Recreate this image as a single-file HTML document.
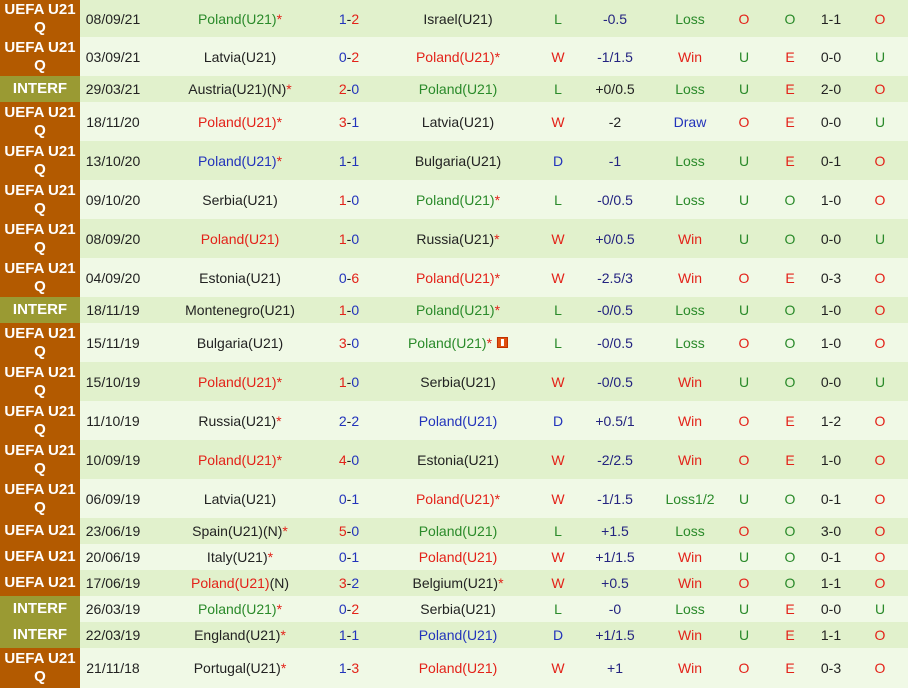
<!DOCTYPE html>
<html><head><meta charset="utf-8"><style>
body{margin:0;width:908px;height:688px;overflow:hidden;font-family:"Liberation Sans",Arial,sans-serif;font-size:14px;color:#222}
.r{position:relative;width:908px}
.d{background:#e1f1cc}.l{background:#f0f9e6}
.c{position:absolute;left:0;top:0;bottom:0;width:80px;color:#fff;font-weight:bold;font-size:15px;text-align:center;display:flex;align-items:center;justify-content:center;line-height:18px}
.u{background:#b35a00}.i{background:#9a9a33}
.r span{position:absolute;top:50%;transform:translate(-50%,-50%);white-space:nowrap}
.g{color:#2a8a2a}.rd{color:#e32219}.b{color:#2233bb}.k{color:#222}.n{color:#232380}
.s{color:#e32219}
.flag{display:inline-block;width:9px;height:9px;background:#e05010;border:1px solid #c03000;vertical-align:0;margin-left:5px;position:relative}
.flag:after{content:"";position:absolute;left:3px;top:1px;width:3px;height:7px;background:#fff}
</style></head><body>
<div id="t"></div>
<script>
const rows=[
[37,'u','UEFA U21<br>Q','08/09/21','g:Poland(U21)S','B1-R2','k:Israel(U21)','g:L','n:-0.5','g:Loss','rd:O','g:O','1-1','rd:O'],
[39,'u','UEFA U21<br>Q','03/09/21','k:Latvia(U21)','B0-R2','rd:Poland(U21)*','rd:W','n:-1/1.5','rd:Win','g:U','rd:E','0-0','g:U'],
[26,'i','INTERF','29/03/21','k:Austria(U21)(N)S','R2-B0','g:Poland(U21)','g:L','k:+0/0.5','g:Loss','g:U','rd:E','2-0','rd:O'],
[39,'u','UEFA U21<br>Q','18/11/20','rd:Poland(U21)*','R3-B1','k:Latvia(U21)','rd:W','k:-2','b:Draw','rd:O','rd:E','0-0','g:U'],
[39,'u','UEFA U21<br>Q','13/10/20','b:Poland(U21)S','B1-B1','k:Bulgaria(U21)','b:D','n:-1','g:Loss','g:U','rd:E','0-1','rd:O'],
[39,'u','UEFA U21<br>Q','09/10/20','k:Serbia(U21)','R1-B0','g:Poland(U21)S','g:L','n:-0/0.5','g:Loss','g:U','g:O','1-0','rd:O'],
[39,'u','UEFA U21<br>Q','08/09/20','rd:Poland(U21)','R1-B0','k:Russia(U21)S','rd:W','n:+0/0.5','rd:Win','g:U','g:O','0-0','g:U'],
[39,'u','UEFA U21<br>Q','04/09/20','k:Estonia(U21)','B0-R6','rd:Poland(U21)*','rd:W','n:-2.5/3','rd:Win','rd:O','rd:E','0-3','rd:O'],
[26,'i','INTERF','18/11/19','k:Montenegro(U21)','R1-B0','g:Poland(U21)S','g:L','n:-0/0.5','g:Loss','g:U','g:O','1-0','rd:O'],
[39,'u','UEFA U21<br>Q','15/11/19','k:Bulgaria(U21)','R3-B0','g:Poland(U21)SF','g:L','n:-0/0.5','g:Loss','rd:O','g:O','1-0','rd:O'],
[39,'u','UEFA U21<br>Q','15/10/19','rd:Poland(U21)*','R1-B0','k:Serbia(U21)','rd:W','n:-0/0.5','rd:Win','g:U','g:O','0-0','g:U'],
[39,'u','UEFA U21<br>Q','11/10/19','k:Russia(U21)S','B2-B2','b:Poland(U21)','b:D','n:+0.5/1','rd:Win','rd:O','rd:E','1-2','rd:O'],
[39,'u','UEFA U21<br>Q','10/09/19','rd:Poland(U21)*','R4-B0','k:Estonia(U21)','rd:W','n:-2/2.5','rd:Win','rd:O','rd:E','1-0','rd:O'],
[39,'u','UEFA U21<br>Q','06/09/19','k:Latvia(U21)','B0-B1','rd:Poland(U21)*','rd:W','n:-1/1.5','g:Loss1/2','g:U','g:O','0-1','rd:O'],
[26,'u','UEFA U21','23/06/19','k:Spain(U21)(N)S','R5-B0','g:Poland(U21)','g:L','n:+1.5','g:Loss','rd:O','g:O','3-0','rd:O'],
[26,'u','UEFA U21','20/06/19','k:Italy(U21)S','B0-B1','rd:Poland(U21)','rd:W','n:+1/1.5','rd:Win','g:U','g:O','0-1','rd:O'],
[26,'u','UEFA U21','17/06/19','P','R3-B2','k:Belgium(U21)S','rd:W','n:+0.5','rd:Win','rd:O','g:O','1-1','rd:O'],
[26,'i','INTERF','26/03/19','g:Poland(U21)S','B0-R2','k:Serbia(U21)','g:L','n:-0','g:Loss','g:U','rd:E','0-0','g:U'],
[26,'i','INTERF','22/03/19','k:England(U21)S','B1-B1','b:Poland(U21)','b:D','n:+1/1.5','rd:Win','g:U','rd:E','1-1','rd:O'],
[40,'u','UEFA U21<br>Q','21/11/18','k:Portugal(U21)S','B1-R3','rd:Poland(U21)','rd:W','n:+1','rd:Win','rd:O','rd:E','0-3','rd:O']
];
const X=[113,240,349,458,558,615,690,744,790,831,880];
const B=(c,t)=>`<b style="font-weight:normal" class="${c}">${t}</b>`;
let h='';
rows.forEach((r,n)=>{
 h+=`<div class="r ${n%2?'l':'d'}" style="height:${r[0]}px"><div class="c ${r[1]}">${r[2]}</div>`;
 for(let j=3;j<r.length;j++){
  let v=r[j],cls='k',html;
  if(j==5){
   const m=v.match(/^([RB])(\d)-([RB])(\d)$/);html=B(m[1]=='R'?'rd':'b',m[2])+'-'+B(m[3]=='R'?'rd':'b',m[4]);
  } else if(v=='P'){html=B('rd','Poland(U21)')+'(N)';}
  else{
   let i=v.indexOf(':');if(i>0&&i<3){cls=v.slice(0,i);v=v.slice(i+1);}
   let f=false;if(v.endsWith('F')){f=true;v=v.slice(0,-1);}
   if(v.endsWith('S'))v=v.slice(0,-1)+B('s','*');
   if(f)v+='<i class="flag"></i>';
   html=v;
  }
  h+=`<span class="${cls}" style="left:${X[j-3]}px">${html}</span>`;
 }
 h+='</div>';
});
document.getElementById('t').innerHTML=h;
</script>
</body></html>
